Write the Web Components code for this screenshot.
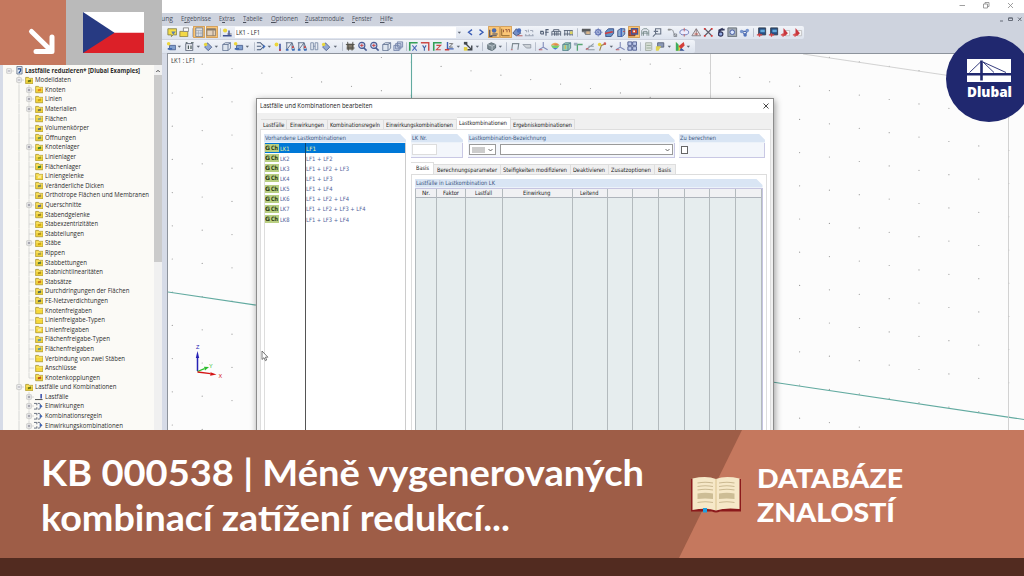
<!DOCTYPE html>
<html lang="cs">
<head>
<meta charset="utf-8">
<title>KB 000538</title>
<style>
	html, body { margin:0; padding:0; }
	body {
		width:1024px;
		height:576px;
		overflow:hidden;
		background:#fff;
		font-family:"Open Sans", "Noto Sans", sans-serif;
	}
</style>
</head>
<body>
<kb-thumbnail></kb-thumbnail>

<script>
// Text squeezed or stretched to a fixed width
class FitText extends HTMLElement {
	constructor() {
		super()
		this.attachShadow({ mode: 'open' })
		this.shadowRoot.innerHTML = `
      <style>
        :host { display:block; flex:none; white-space:nowrap; }
        span { display:inline-block; transform-origin:0 50%; }
      </style>
      <span><slot></slot></span>
    `
	}

	connectedCallback() {
		const width = Number(this.getAttribute('w'))
		const span = this.shadowRoot.querySelector('span')
		const natural = span.offsetWidth ? span.getBoundingClientRect().width : 0
		this.style.width = `${width}px`
		if (natural) span.style.transform = `scaleX(${width / natural})`
	}
}
customElements.define('fit-text', FitText)

const BASE_ICONS = {
	bubble: '<path d="M1 2h10v7H7l-2 2V9H1z" fill="#f6dc3a" stroke="#7d7a42"/><path d="M5 5h5l-3 4z" fill="#5278a8"/>',
	open: '<path d="M1 5h9v6H1z" fill="#f5d738" stroke="#8b7b35"/><path d="M5 1h6v4H5z" fill="#fff" stroke="#777"/>',
	table: '<path d="M2 1h8v10H2z" fill="#dbe3ee" stroke="#68768c"/><path d="M2 4h8M5 4v7M8 4v7M2 7h8" stroke="#8e9bb0" stroke-width=".7"/>',
	panel: '<path d="M1 2h10v8H1z" fill="#e2d3c1" stroke="#7e7468"/><path d="M1 3h10" stroke="#7e7468" stroke-width="2"/><path d="M8 4v6" stroke="#7e7468"/>',
	load: '<circle cx="3.5" cy="4" r="2.4" fill="#ecd52f"/><path d="M1 10h10M8 4v6" stroke="#33468c" stroke-width="1.6"/><path d="M6 8h5" stroke="#556"/>',
	down: '<path d="M4.2 5.5h3.8L6.1 7.6z" fill="#555d6b"/>',
	prev: '<path d="M8 3L4 6l4 3" fill="none" stroke="#2b50b0" stroke-width="1.5"/>',
	next: '<path d="M4 3l4 3-4 3" fill="none" stroke="#2b50b0" stroke-width="1.5"/>',
	support: '<circle cx="7" cy="4" r="2.6" fill="#3b63b5"/><path d="M2 3v8h3M5 8h6M3 10h7" stroke="#344063" fill="none" stroke-width="1.3"/>',
	values: '<path d="M2 2v8h9" stroke="#704d1c" fill="none"/><path d="M4 3v3M6 3h2v3M9 3h2v3" stroke="#8a4632" fill="none"/>',
	eye: '<path d="M1 7l4-5 5 5-5 3z" fill="#6b87c4" stroke="#35436e"/><circle cx="8" cy="4" r="2.5" fill="#3f65b8"/><path d="M6 10h6" stroke="#b14040"/>',
	scale: '<path d="M1 4h2v2M5 3v3M7 4h3v2M1 10h10M2 8v2M6 8v2M10 8v2" stroke="#8f98a9" fill="none"/>',
	quote: '<path d="M2 8V5h3M2 8h3V5M8 10V3h3M7 6h4" stroke="#46536a" fill="none" stroke-width="1.3"/>',
	bridge: '<path d="M1 10V5h10v5M3 5V3h6v2M1 8h10M4 5v5M6 5v5M8 5v5" stroke="#475368" fill="none"/>',
	rail: '<path d="M1 4h10M1 8h10M2 4v6M5 4v6M8 4v6M10.5 4v6" stroke="#475368"/><path d="M8 5h3v3H8z" fill="#d8cf55"/>',
	hand: '<path d="M1 3h6l4 2v4H5L3 6H1z" fill="#7b7d80"/><path d="M1 2h10v3H1z" fill="#4d4f52"/><path d="M6 5h4v3H6z" fill="#d6b183"/>',
	gear: '<circle cx="6" cy="6" r="3" fill="#dfe7ff" stroke="#5366ac" stroke-width="1.3"/><path d="M6 1v10M1 6h10M3 3l6 6M9 3L3 9" stroke="#6476b5" stroke-width=".8"/>',
	cube: '<path d="M2 4l3-2h6v6l-3 3H2zM2 4h6v7M8 4l3-2" fill="#dfe6ef" stroke="#5a6d8e"/>',
	cubered: '<path d="M2 5l3-3h6v5l-3 4H2z" fill="#5a8cc4" stroke="#2a3e78"/><path d="M1 7.5l9-2" stroke="#cf3030" stroke-width="1.8"/>',
	cubeblue: '<path d="M2 4l3-2h5v6l-3 3H2z" fill="#8aaad0" stroke="#314779"/><path d="M6 1v10" stroke="#315bc0" stroke-width="1.6"/><path d="M8 5h2" stroke="#c33"/>',
	target: '<path d="M1 4h7v6H1z" fill="#cc4129" stroke="#60281e"/><path d="M4 2h7v6H4z" fill="#cc4129" stroke="#314e9e" stroke-width="1.5"/><path d="M6 4h2v2H6z" fill="#fff"/>',
	frame: '<path d="M2 10V4l2-2h4l2 2v6M4 10V5h4v5M2 7h8" fill="none" stroke="#6d8180"/>',
	lens: '<path d="M4 2h6v6H4zM5 7l-4 4M2 5h5" fill="none" stroke="#5d687c" stroke-width="1.2"/>',
	arc: '<path d="M1 3h4c3 0 2 6 5 7M8 8h3v3H8z" fill="none" stroke="#72777e"/><path d="M1 2h3v2H1z" fill="#888"/>',
	ellipse: '<ellipse cx="6" cy="6" rx="5" ry="3" fill="#eef" stroke="#5868b0"/><path d="M6 1v4M6 8v3" stroke="#c35454"/>',
	tri: '<path d="M6 2l5 8H1zM6 2v8" fill="#efe4e4" stroke="#776d72"/><path d="M4 8h4" stroke="#c0392b"/>',
	cross: '<path d="M2 2l8 8M10 2l-8 8" stroke="#51505e" stroke-width="1.3"/><path d="M1 1h2v2H1zM9 1h2v2H9zM1 9h2v2H1zM9 9h2v2H9z" fill="#d12c2c"/>',
	six: '<path d="M9 2L5 4v6" stroke="#23284f" stroke-width="2.4" fill="none"/><circle cx="6.5" cy="8" r="2.5" fill="#8fa7e3" stroke="#23284f" stroke-width="1.3"/><path d="M8 2h3v2H8z" fill="#23284f"/>',
	photo: '<path d="M1 1h10v10H1z" fill="#9ba5ae" stroke="#59626b"/><circle cx="6" cy="6" r="2.6" fill="#dbe8ff" stroke="#31489a"/>',
	nodes: '<path d="M3 5h6M3 5l4 4M7 9l3-5" stroke="#4161a8" stroke-width="1.3"/><circle cx="3" cy="5" r="2" fill="#6f8fcb"/><circle cx="9.5" cy="4" r="2" fill="#6f8fcb"/><circle cx="7" cy="9" r="2" fill="#4468b6"/>',
	monitor: '<path d="M3 1h8v8H3z" fill="#16427c" stroke="#27303f"/><path d="M5 3h5v3H5z" fill="#58a4d8"/><path d="M1 9h6M4 7v4" stroke="#d63636" stroke-width="1.5"/>',
	adobe: '<path d="M6 4h5v6H6z" fill="#f6f6f6" stroke="#bbb"/><path d="M4 10V1l5 6-3 3z" fill="#c4272f"/><path d="M1 9h5M3.5 7v4" stroke="#d63636" stroke-width="1.4"/>',
	newload: '<path d="M4 5h7v5H4z" fill="#7899cc" stroke="#44598a"/><circle cx="3" cy="3" r="2" fill="#efd42c"/><path d="M2 9h5" stroke="#355fa7" stroke-width="2"/>',
	calendar: '<path d="M2 3h8v8H2z" fill="#eef0f4" stroke="#4d566b"/><path d="M2 2h2M8 2h3M5 5v4M8 5v4" stroke="#344" stroke-width="1.3"/>',
	drop: '<path d="M5 2l5 5-4 4-4-4z" fill="#8ba3d1" stroke="#43557e"/><circle cx="3" cy="4" r="2" fill="#e8d530"/>',
	branch: '<path d="M1 2h4l4 4-4 4H1M1 6h5" fill="none" stroke="#3b4d6f" stroke-width="1.2"/><path d="M8 4l3 2-3 3z" fill="#3060b0"/>',
	spark: '<circle cx="4" cy="4" r="2.2" fill="#edd52d"/><path d="M8 3v8" stroke="#4559a5" stroke-width="2"/><path d="M8 9v3" stroke="#cb3030" stroke-width="1.6"/>',
	truss: '<path d="M1 2h7l3 8M2 2v8l6-8v8" fill="none" stroke="#586984" stroke-width="1.1"/><path d="M1 9h3v2H1zM8 9h3v2H8z" fill="#3266b5"/><path d="M8 6h2v2H8z" fill="#c83434"/>',
	grid: '<path d="M2 2h3v8H2zM7 2h3v8H7zM5 6h2" fill="#e7ecf4" stroke="#7183a1"/>',
	ghost: '<path d="M2 3h8v7H2z" fill="#7a7060"/><path d="M3 1l1 10M9 1L8 11M1 4h10M2 8h9" stroke="#43423a" stroke-width="1"/>',
	zoom: '<circle cx="5.5" cy="5" r="3.5" fill="#cfdef5" stroke="#3e518c" stroke-width="1.3"/><path d="M8 8l3 3" stroke="#3e518c" stroke-width="1.8"/><path d="M5.5 3v4M3.5 5h4" stroke="#c93030"/>',
	layers: '<path d="M5 1h6v6H5zM3 3h6v6H3zM1 5h6v6H1z" fill="#c8d2e6" stroke="#6a7ba4"/>',
	axisx: '<path d="M2 11V2h9" stroke="#25984b" stroke-width="1.8" fill="none"/><path d="M5 5l5 6M10 5l-5 6" stroke="#3e62b4" stroke-width="1.2"/>',
	axisy: '<path d="M10 11V2H1" stroke="#c93c39" stroke-width="1.6" fill="none"/><path d="M3 5l2 3 2-3M5 8v3" stroke="#30569d" stroke-width="1.2" fill="none"/>',
	axisz: '<path d="M2 11V2h9" stroke="#259a4b" stroke-width="1.8" fill="none"/><path d="M5 5h5l-5 5h5" stroke="#c93c39" stroke-width="1.2" fill="none"/>',
	axis3: '<path d="M4 1v8h7" stroke="#3255ab" stroke-width="1.6" fill="none"/><path d="M6 3h4L6 7h4" stroke="#555" fill="none"/><path d="M1 10h5" stroke="#c93030" stroke-width="1.7"/>',
	select: '<path d="M2 2l7 7M5 10h5V5" stroke="#343940" stroke-width="1.6" fill="none"/><path d="M1 1h4v3H1z" fill="#343940"/><path d="M1 7h4v4H1z" fill="#e2cb2e"/>',
	ball: '<path d="M2 4l4-2 5 2v4l-4 3-5-2z" fill="#76858d" stroke="#4c5c64"/><path d="M2 4l5 2v5M7 6l4-2" stroke="#b8c4ca" fill="none"/>',
	gate: '<path d="M2 10l1-7h7l-1 7" fill="none" stroke="#76818a" stroke-width="1.3"/><path d="M1 10h2" stroke="#c75b5b"/>',
	tag: '<path d="M1 4h9v4H5z" fill="#ccd1d6" stroke="#8c949f"/>',
	axes: '<path d="M6 1v6l5 3M6 7l-5 3" stroke="#7882b5" stroke-width="1.2" fill="none"/><path d="M1 10h4" stroke="#c34a4a"/>',
	rainbow: '<path d="M1 5c2-4 8-4 10 0z" fill="#e9a04d"/><path d="M1 5h10L9 8H3z" fill="#6dcc61"/><path d="M3 8h6l-3 2z" fill="#3c78ce"/><path d="M5 4.500h4" stroke="#d8593d"/>',
	mesh: '<path d="M2 4l3-2h6v6l-3 3H2z" fill="#8dcbb0" stroke="#4e7a85"/><path d="M2 4h6v7M8 4l3-2" stroke="#507e88" fill="none"/><path d="M5 5v4" stroke="#d3b948" stroke-width="1.5"/>',
	force: '<path d="M5 11V4M2 4h9" stroke="#4ba067" stroke-width="1.5"/><path d="M1 2h4v3H1z" fill="#9ba8bd"/>',
	beam: '<path d="M1 10l9-7M3 10h8M4 6h6" stroke="#87959f" stroke-width="1.2"/><path d="M1 9h3" stroke="#c33"/>',
	branchy: '<path d="M3 11l2-6 5-2" stroke="#957d40" fill="none" stroke-width="1.3"/><circle cx="3" cy="4" r="2" fill="#e9d22e"/><circle cx="9" cy="3" r="1.5" fill="#cd514b"/>',
	windows: '<path d="M1 1h4.5v4H1zM6.500 1H11v4H6.500zM1 6.500h4.500v4H1zM6.500 6.500H11v4H6.500z" fill="#bdc9ec" stroke="#3c4a82"/>',
	doc: '<path d="M3 2h7v8l-1 1H3z" fill="#d9e1d7" stroke="#9ba59b"/><path d="M4 5h5M4 8h5" stroke="#8ca08c"/>',
	palette: '<path d="M3 2h7v5H3z" fill="#8392b2" stroke="#4d566f"/><path d="M1 6h6l-3 5H1z" fill="#e0d243"/>',
	colors: '<path d="M1 1v10h9z" fill="#ddd32e"/><path d="M1 1v10h3V4z" fill="#2fa85a"/><path d="M4 6l6-5 1 4-4 4z" fill="#d3312b"/><path d="M7 8l4 3H5z" fill="#2846af"/>',
}

class ToolIcon extends HTMLElement {
	constructor() {
		super()
		this.attachShadow({ mode: 'open' })
	}

	connectedCallback() {
		const name = this.getAttribute('name')
		this.shadowRoot.innerHTML = `
      <style>
        :host { display:grid; place-items:center; flex:none; width:12px; height:12px; box-sizing:border-box; border-radius:1px; }
        :host([active]) { background:#fbc676; box-shadow:inset 0 0 0 .7px #c99757; }
        :host([name="sep"]) { width:1px; height:9px; background:#b9c0cd; }
        svg { width:10.5px; height:10.5px; display:block; opacity:.92; }
      </style>
      ${name === 'sep' ? '' : `<svg viewBox="0 0 12 12" aria-hidden="true">${BASE_ICONS[name] || ''}</svg>`}
    `
	}
}
customElements.define('tool-icon', ToolIcon)

// [icon, centre] pairs; a trailing ! marks a pressed button
const TOOLBAR_MAIN = [
	['bubble', 172], ['open', 184], ['sep', 192], ['table!', 199], ['panel!', 211.5], ['sep', 220], ['load', 227],
	['case', 345], ['down', 459], ['prev', 470.5], ['next', 481.5], ['support!', 493.5], ['values!', 505.5], ['eye', 517.5],
	['scale', 529.5], ['quote', 544.5], ['bridge', 556.5], ['rail', 568.5], ['sep', 577.5], ['hand', 586.5],
	['gear', 598], ['cubered', 609.5], ['cubeblue', 621.5], ['target!', 633.5], ['frame', 645.5], ['lens', 657.5],
	['arc', 672.5], ['ellipse', 684.5], ['tri', 696.5], ['cross', 708.5], ['six', 720.5], ['photo', 732.5],
	['nodes', 744.5], ['sep', 753.5], ['monitor', 761.5], ['monitor', 773.5], ['adobe', 785.5], ['adobe', 797.5],
]
const TOOLBAR_VIEW = [
	['newload', 171], ['down', 179.5], ['calendar', 189.5], ['down', 198], ['drop', 208], ['down', 216.5],
	['cube', 226], ['newload', 238.5], ['down', 247], ['sep', 254], ['branch', 261], ['down', 269.5], ['spark', 278],
	['truss', 290], ['truss', 302], ['grid', 314], ['drop', 326.5], ['down', 335], ['sep', 342], ['ghost', 350.5],
	['zoom', 362.5], ['zoom', 374.5], ['cube', 386.5], ['layers', 398.5], ['sep', 406.5], ['axisx', 413.5],
	['axisy', 425.5], ['axisz', 437.5], ['axis3', 449.5], ['down', 458.5], ['select', 468.5], ['down', 477],
	['sep', 482.5], ['ball', 491.5], ['down', 500], ['sep', 506.5], ['gate', 515], ['tag', 527], ['sep', 535],
	['axes', 543.5], ['rainbow', 555], ['mesh', 566.5], ['force', 578.5], ['beam', 590.5], ['branchy', 602.5],
	['down', 611], ['axes', 620.5], ['windows', 632], ['sep', 640], ['doc', 648.5], ['palette', 660.5],
	['down', 669.5], ['colors', 680], ['down', 688.5],
]

class AppToolbar extends HTMLElement {
	constructor() {
		super()
		this.attachShadow({ mode: 'open' })
	}

	connectedCallback() {
		const items = this.getAttribute('kind') === 'main' ? TOOLBAR_MAIN : TOOLBAR_VIEW
		let edge = 161
		const html = items.map(([key, centre]) => {
			const name = key.replace('!', '')
			const width = name === 'sep' ? 1 : name === 'case' ? 221 : 12
			const gap = centre - width / 2 - edge
			edge = centre + width / 2
			if (name === 'case')
				return `<div class="case" style="margin-left:${gap}px"><fit-text w="24">LK1 - LF1</fit-text></div>`
			return `<tool-icon name="${name}" ${key.endsWith('!') ? 'active' : ''} style="margin-left:${gap}px"></tool-icon>`
		})
		this.shadowRoot.innerHTML = `
      <style>
        :host { display:block; height:14px; padding-left:161px; }
        .bar {
          display:flex;
          align-items:center;
          height:13px;
          width:max-content;
          border-radius:0 2px 2px 0;
          background:linear-gradient(#f1f4f9, #dde3ee);
        }
        .case {
          flex:none;
          display:flex;
          align-items:center;
          box-sizing:border-box;
          width:221px;
          height:11px;
          padding-left:1.5px;
          background:#fff;
          font-size:6.5px;
          color:#222;
        }
      </style>
      <div class="bar">${html.join('')}</div>
    `
	}
}
customElements.define('app-toolbar', AppToolbar)

class AppMenu extends HTMLElement {
	constructor() {
		super()
		this.attachShadow({ mode: 'open' })
		const items = [
			['ung', 161, 12], ['E<u>r</u>gebnisse', 181, 30], ['E<u>x</u>tras', 219, 16], ['<u>T</u>abelle', 243, 19.5],
			['<u>O</u>ptionen', 270.5, 27], ['<u>Z</u>usatzmodule', 305, 39], ['<u>F</u>enster', 352, 20], ['<u>H</u>ilfe', 380, 13],
		]
		let edge = 0
		const html = items.map(([label, x, w]) => {
			const gap = x - edge
			edge = x + w
			return `<fit-text w="${w}" style="margin-left:${gap}px">${label}</fit-text>`
		})
		this.shadowRoot.innerHTML = `
      <style>
        :host { display:flex; align-items:center; height:13px; font-size:6.4px; line-height:10px; color:#4b505c; }
        u { text-decoration-thickness:.5px; text-underline-offset:1px; }
        svg { margin-left:auto; width:24px; height:8px; margin-right:1px; }
      </style>
      ${html.join('')}
      <svg viewBox="0 0 24 8" fill="none" stroke="#666c78"><path d="M1 6h3M9.500 3h4v2.500h-4zM9.500 3h4M19 2.500l3.500 3.500M22.500 2.500L19 6"/></svg>
    `
	}
}
customElements.define('app-menu', AppMenu)

// [level, expander, icon tint, label, width]
const TREE = [
	[0, '-', 'model', 'Lastfälle reduzieren* [Dlubal Examples]', 115],
	[1, '-', '#5b6a10', 'Modelldaten', 36],
	[2, '+', '#e07818', 'Knoten', 20.5],
	[2, '+', '#c79d12', 'Linien', 17],
	[2, '+', '#6b6a52', 'Materialien', 31.5],
	[2, '', '#7d9a8c', 'Flächen', 22],
	[2, '', '#3e5a8c', 'Volumenkörper', 44],
	[2, '', '#5d8a5a', 'Öffnungen', 31],
	[2, '+', '#277a2c', 'Knotenlager', 34.5],
	[2, '', '#8c9a2c', 'Linienlager', 31],
	[2, '', '#1f6b38', 'Flächenlager', 36],
	[2, '', '#f7eeb0', 'Liniengelenke', 39],
	[2, '', '#6b7a6a', 'Veränderliche Dicken', 59],
	[2, '', '#8a7a5a', 'Orthotrope Flächen und Membranen', 104],
	[2, '+', '#4c5a9c', 'Querschnitte', 36.5],
	[2, '', '#8a7620', 'Stabendgelenke', 45],
	[2, '', '#c79d12', 'Stabexzentrizitäten', 53],
	[2, '', '#a88718', 'Stabteilungen', 39],
	[2, '+', '#c79d12', 'Stäbe', 16],
	[2, '', '#9a9450', 'Rippen', 20],
	[2, '', '#4a6b3a', 'Stabbettungen', 42],
	[2, '', '#a88718', 'Stabnichtlinearitäten', 58],
	[2, '', '#c06a1c', 'Stabsätze', 26.5],
	[2, '', '#3d5c5a', 'Durchdringungen der Flächen', 84.5],
	[2, '', '#4a5a4a', 'FE-Netzverdichtungen', 63],
	[2, '', '', 'Knotenfreigaben', 47],
	[2, '', '', 'Linienfreigabe-Typen', 60],
	[2, '', '#f7eeb0', 'Linienfreigaben', 44],
	[2, '', '#4f8fb0', 'Flächenfreigabe-Typen', 65],
	[2, '', '#4f8fb0', 'Flächenfreigaben', 49],
	[2, '', '', 'Verbindung von zwei Stäben', 80],
	[2, '', '', 'Anschlüsse', 31.5],
	[2, 'end', '#b0401c', 'Knotenkopplungen', 55],
	[1, '-', '#5b6a10', 'Lastfälle und Kombinationen', 81.5],
	[2, '+', 'case', 'Lastfälle', 23.5],
	[2, '+', 'combo', 'Einwirkungen', 39],
	[2, '+', 'combo', 'Kombinationsregeln', 57],
	[2, '+', 'combo', 'Einwirkungskombinationen', 78],
]

class ProjectTree extends HTMLElement {
	constructor() {
		super()
		this.attachShadow({ mode: 'open' })
		this.shadowRoot.innerHTML = `
      <style>
        :host { display:flex; flex:none; width:167px; box-sizing:border-box; background:#d6dbe7; padding-left:3px; }
        .list { width:151px; background:#fbfaf6; padding-top:12.2px; font-size:6.5px; line-height:9.6px; color:#2d2d2d; overflow:hidden; box-sizing:border-box; }
        .row { display:flex; align-items:center; height:9.6px; padding-left:.5px; }
        .row.root { font-weight:700; }
        .cell { flex:none; width:10px; height:9.6px; display:block; }
        .icon { flex:none; width:8.5px; height:8.5px; margin:0 2px 0 1px; }
        .wide { margin-left:-1px; width:10.5px; }
        .scroll { width:8px; background:#f0f0f0; padding-top:12px; display:flex; flex-direction:column; align-items:center; }
        .scroll svg { width:8px; height:9px; }
        .thumb { width:8px; height:187px; background:#cbcbcb; }
      </style>
      <div class="list">${TREE.map((row) => this.row(row)).join('')}</div>
      <div class="scroll">
        <svg viewBox="0 0 8 9"><path d="M2.300 6L4 4.300 5.700 6" fill="none" stroke="#444" stroke-width="1"/></svg>
        <div class="thumb"></div>
      </div>
    `
	}

	row([level, expander, tint, label, width]) {
		const cells = []
		if (level === 2) cells.push(this.cell('blank'), this.cell('pass'), this.cell(expander))
		if (level === 1) cells.push(this.cell('blank'), this.cell(expander))
		if (level === 0) cells.push(this.cell('root'))
		return `<div class="row ${level ? '' : 'root'}">${cells.join('')}${this.icon(tint)}<fit-text w="${width}">${label}</fit-text></div>`
	}

	cell(kind) {
		let art = ''
		if (kind !== 'blank' && kind !== 'root')
			art += `<path d="M5 0V${kind === 'end' ? 5 : 9.6}" stroke="#cfcfcf" stroke-width=".8"/>`
		if (kind !== 'blank' && kind !== 'pass') art += '<path d="M5 5h6" stroke="#cfcfcf" stroke-width=".8"/>'
		if (kind === '+' || kind === '-' || kind === 'root') {
			art += '<path d="M2.800 2.800h4.400v4.400H2.800z" fill="#fff" stroke="#b5b5b5" stroke-width=".7"/><path d="M3.700 5h2.600" stroke="#667" stroke-width=".7"/>'
			if (kind === '+') art += '<path d="M5 3.700v2.600" stroke="#667" stroke-width=".7"/>'
		}
		return `<svg class="cell" viewBox="0 0 10 9.6">${art}</svg>`
	}

	icon(tint) {
		if (tint === 'model')
			return '<svg class="icon" viewBox="0 0 9 9"><path d="M2 .5h5.500v8H2z" fill="#dfe9f5" stroke="#5b6a80" stroke-width=".8"/><path d="M3 3h3v2L4 7.500" fill="none" stroke="#23498a" stroke-width="1.200"/></svg>'
		if (tint === 'case')
			return '<svg class="icon" viewBox="0 0 9 9"><path d="M0 8h8" stroke="#444"/><path d="M6.500 2v5" stroke="#3348a8" stroke-width="1.600"/></svg>'
		if (tint === 'combo')
			return '<svg class="icon wide" viewBox="0 0 11 9"><path d="M1 1.500h3v2M1 7.500h3v-2M5 1.500h2l2 3-2 3H5" fill="none" stroke="#555f70" stroke-width=".9"/><path d="M7 2.500l3 2-3 2z" fill="#3c62ba"/></svg>'
		const mark = tint ? `<path d="M3 4.200h3.500v2.300H3z" fill="${tint}" opacity=".75"/><path d="M3 6.500l3.500-2.800" stroke="${tint}" stroke-width=".8"/>` : ''
		return `<svg class="icon" viewBox="0 0 9 9"><path d="M.7 1.500h3l.7 1h4v5.700H.7z" fill="#f6d93c" stroke="#a8922c" stroke-width=".8"/><path d="M1.200 3.300h6.800" stroke="#fff09a" stroke-width=".7"/>${mark}</svg>`
	}
}
customElements.define('project-tree', ProjectTree)

class ModelView extends HTMLElement {
	constructor() {
		super()
		this.attachShadow({ mode: 'open' })
		this.shadowRoot.innerHTML = `
      <style>
        :host { display:block; flex:1; background:#fcfcfc; border:solid #8d939c; border-width:1px 0 0 1px; margin-top:-1px; position:relative; font-size:6.4px; color:#333; }
        svg { position:absolute; left:0; top:0; width:856px; height:376px; }
        fit-text { padding:2px 0 0 2.5px; position:relative; }
      </style>
      <svg viewBox="168 54 856 376">
        ${this.dots()}
        <path d="M168 292L1024 419.500M411.500 54v60" stroke="#62aaa0" stroke-width="1.100" fill="none"/>
        <path d="M803 54l206 30.500M1008.500 84v346M710.500 54v60" stroke="#cdcdcd" stroke-width=".9" fill="none"/>
        <path d="M197.500 371v-14" stroke="#2722b4" stroke-width="1.500"/>
        <path d="M195.800 358l1.700-7 1.700 7z" fill="#2722b4"/>
        <path d="M197.500 371.500l7-2.800" stroke="#2bbd2b" stroke-width="1.300"/>
        <path d="M204 366.800l5 .2-4 3.400z" fill="#2bbd2b"/>
        <path d="M197.500 372l13 1.700" stroke="#d41414" stroke-width="1.300"/>
        <path d="M210.500 372.200l6 2.300-6.300 1.200z" fill="#d41414"/>
        <g font-family="Liberation Sans" font-size="5.500">
          <text x="196" y="348.500" fill="#2722b4">Z</text>
          <text x="209" y="368" fill="#2bbd2b">Y</text>
          <text x="218.500" y="377.500" fill="#d41414">X</text>
        </g>
      </svg>
      <fit-text w="24.5">LK1 : LF1</fit-text>
    `
	}

	dots() {
		let out = ''
		for (let col = 0; col < 29; col++) {
			for (let row = -5; row < 12; row++) {
				const x = 172.3 + col * 29.87
				const y = 93 + col * 4.42 + row * 33.2
				// nothing is drawn above the model's upper edge on the right
				if (y < 56 || y > 430 || x > 1010) continue
				if (x > 803 && y < 53 + (x - 803) * 0.148) continue
				out += `<circle cx="${x.toFixed(1)}" cy="${y.toFixed(1)}" r=".6" fill="#9a9a9a"/>`
			}
		}
		return out
	}
}
customElements.define('model-view', ModelView)

// Titled box with a cut top right corner
class GroupBox extends HTMLElement {
	constructor() {
		super()
		this.attachShadow({ mode: 'open' })
	}

	connectedCallback() {
		this.shadowRoot.innerHTML = `
      <style>
        :host { display:block; flex:none; box-sizing:border-box; }
        .head {
          height:8.5px;
          padding-left:1px;
          background:#d9e5f4;
          clip-path:polygon(0 0, calc(100% - 6px) 0, 100% 6px, 100% 100%, 0 100%);
          color:#3b5680;
          font-size:6px;
          line-height:8.5px;
        }
        .body { background:#f3f6fb; }
        :host([boxed]) .body { height:15.5px; display:flex; align-items:center; gap:4px; padding-left:1px; box-sizing:border-box; border:solid #c9c8e4; border-width:0 1px 1px 0; }
      </style>
      <div class="head"><fit-text w="${this.getAttribute('tw')}">${this.getAttribute('label')}</fit-text></div>
      <div class="body"><slot></slot></div>
    `
	}
}
customElements.define('group-box', GroupBox)

class TabStrip extends HTMLElement {
	constructor() {
		super()
		this.attachShadow({ mode: 'open' })
	}

	connectedCallback() {
		// items: "label|tab width|text width", the active one starts with *
		const tabs = this.getAttribute('items').split(';').map((item) => {
			const [label, width, textWidth] = item.split('|')
			const active = label.startsWith('*')
			return `<div class="tab ${active ? 'active' : ''}" style="width:${width}px"><fit-text w="${textWidth}">${label.replace('*', '')}</fit-text></div>`
		})
		this.shadowRoot.innerHTML = `
      <style>
        :host { display:flex; align-items:flex-end; height:12px; font-size:6px; line-height:10px; color:#222; }
        .tab { flex:none; display:flex; justify-content:center; align-items:center; box-sizing:border-box; height:10px; background:#f0f0f0; border:solid #dedede; border-width:1px 1px 0 0; }
        .tab.active { height:12px; background:#fff; padding-bottom:2px; }
      </style>
      ${tabs.join('')}
    `
	}
}
customElements.define('tab-strip', TabStrip)

class CombinationDialog extends HTMLElement {
	constructor() {
		super()
		this.attachShadow({ mode: 'open' })
		const cases = [
			['LK1', 'LF1', 10], ['LK2', 'LF1 + LF2', 26.5], ['LK3', 'LF1 + LF2 + LF3', 43], ['LK4', 'LF1 + LF3', 26.5],
			['LK5', 'LF1 + LF4', 26.5], ['LK6', 'LF1 + LF2 + LF4', 43], ['LK7', 'LF1 + LF2 + LF3 + LF4', 59.5], ['LK8', 'LF1 + LF3 + LF4', 43],
		]
		const columns = [
			['Nr.', 22.5, 8], ['Faktor', 29, 16], ['Lastfall', 36.5, 17], ['Einwirkung', 70, 27.5], ['Leitend', 35, 18.5],
			['', 25.7], ['', 25.7], ['', 25.7], ['', 25.6], ['', 25.6], ['', 25.6],
		]
		this.shadowRoot.innerHTML = `
      <style>
        :host {
          display:flex;
          flex-direction:column;
          box-sizing:border-box;
          width:518.5px;
          height:340px;
          border:1px solid #8c8c8c;
          background:#f0f0f0;
          box-shadow:1px 2px 7px rgba(0, 0, 0, 0.4);
          font-family:"DejaVu Sans Condensed", "Noto Sans", sans-serif;
        }
        .title { display:flex; align-items:center; justify-content:space-between; height:15.5px; padding:0 3.5px 0 3px; background:#fff; font:6.4px/14px "Open Sans"; color:#222; }
        .title svg { width:8px; height:8px; }
        .outer { padding:4px 0 0 4px; }
        .page { display:flex; box-sizing:border-box; width:511px; height:310px; margin-left:3px; padding:4px 3px 0; background:#fff; border:1px solid #dedede; }
        .existing { width:143.5px; }
        .cases { border-left:1px solid #ddd; border-right:1px solid #ccc; padding-top:.5px; height:290px; background:linear-gradient(90deg, #fff 40px, #555 40px, #555 41px, #fff 41px); }
        .case { display:flex; align-items:center; height:10.15px; font-size:6px; line-height:9px; color:#50649a; }
        .case.on { background:linear-gradient(90deg, #0078d7 40px, #0b4471 40px, #0b4471 41px, #0078d7 41px); color:#e8f29a; }
        .badge { flex:none; height:8px; line-height:8px; background:#b9cf82; color:#2c3a14; font-weight:bold; padding:0 .5px; }
        .name { margin:0 16.5px 0 1.5px; }
        .detail { margin-left:5px; width:356px; }
        .groups { display:flex; gap:4.5px; }
        .input { box-sizing:border-box; height:11px; background:#fff; border:1px solid #ddd; }
        .combo { display:flex; align-items:center; justify-content:space-between; box-sizing:border-box; height:11px; background:#fff; border:1px solid #9a9a9a; padding:0 2px; }
        .combo i { width:13px; height:6px; background:#ccc; }
        .combo svg { width:5px; height:4px; margin-left:auto; }
        .check { box-sizing:border-box; width:7.5px; height:7.5px; border:1px solid #666; background:#fff; margin-left:.5px; }
        .inner { margin-top:4px; }
        .sheet { box-sizing:border-box; height:270px; background:#fff; border:1px solid #ddd; padding:4px 3px 0 2.5px; }
        .table { display:flex; height:250px; border:solid #c5c4e0; border-width:1px 1px 0 0; }
        .col { flex:none; box-sizing:border-box; background:#e6edee; border-right:1px solid #b3babd; }
        .col:first-child { border-left:1px solid #b3babd; }
        .th { height:8.5px; display:flex; justify-content:center; background:#f0f1f3; border-bottom:1px solid #aeb4bb; font-size:6px; line-height:8.5px; color:#222; }
      </style>
      <div class="title">
        <fit-text w="112.5">Lastfälle und Kombinationen bearbeiten</fit-text>
        <svg viewBox="0 0 8 8"><path d="M1.500 1.500l5 5M6.500 1.500l-5 5" stroke="#333" stroke-width=".9"/></svg>
      </div>
      <div class="outer">
        <tab-strip items="Lastfälle|26.5|21.5;Einwirkungen|40.5|34;Kombinationsregeln|56|50;Einwirkungskombinationen|73|67;*Lastkombinationen|54|48;Ergebniskombinationen|64.5|59"></tab-strip>
      </div>
      <div class="page">
        <div class="existing">
          <group-box label="Vorhandene Lastkombinationen" tw="81"></group-box>
          <div class="cases">
            ${cases.map(([name, formula, width], i) => `
              <div class="case ${i ? '' : 'on'}">
                <fit-text class="badge" w="5">G</fit-text>
                <fit-text class="badge" w="7">Ch</fit-text>
                <fit-text class="name" w="9.5">${name}</fit-text>
                <fit-text w="${width}">${formula}</fit-text>
              </div>`).join('')}
          </div>
        </div>
        <div class="detail">
          <div class="groups">
            <group-box boxed label="LK Nr." tw="15" style="width:52px"><div class="input" style="width:25px"></div></group-box>
            <group-box boxed label="Lastkombination-Bezeichnung" tw="77" style="width:207px">
              <div class="combo" style="width:27px"><i></i><svg viewBox="0 0 5 4"><path d="M.5 1l2 2 2-2" fill="none" stroke="#444" stroke-width=".8"/></svg></div>
              <div class="combo" style="width:173px"><svg viewBox="0 0 5 4"><path d="M.5 1l2 2 2-2" fill="none" stroke="#444" stroke-width=".8"/></svg></div>
            </group-box>
            <group-box boxed label="Zu berechnen" tw="36" style="width:86px"><div class="check"></div></group-box>
          </div>
          <tab-strip class="inner" items="*Basis|23|13;Berechnungsparameter|66.5|60;Steifigkeiten modifizieren|70|64;Deaktivieren|38|32;Zusatzoptionen|46|40;Basis|21|13"></tab-strip>
          <div class="sheet">
            <group-box label="Lastfälle in Lastkombination LK" tw="79"></group-box>
            <div class="table">
              ${columns.map(([label, width, textWidth]) => `
                <div class="col" style="width:${width}px"><div class="th">${label ? `<fit-text w="${textWidth}">${label}</fit-text>` : ''}</div></div>`).join('')}
            </div>
          </div>
        </div>
      </div>
    `
	}
}
customElements.define('combination-dialog', CombinationDialog)

class AppWindow extends HTMLElement {
	constructor() {
		super()
		this.attachShadow({ mode: 'open' })
		this.shadowRoot.innerHTML = `
      <style>
        :host { display:flex; flex-direction:column; position:relative; height:430px; overflow:hidden; background:#ced3de; }
        .caption { height:12.5px; flex:none; background:#fff; display:flex; justify-content:flex-end; }
        .caption svg { width:60px; height:10px; margin-right:7px; }
        .work { flex:1; min-height:0; display:flex; }
        combination-dialog { position:absolute; left:255.5px; top:98px; }
        .cursor { position:absolute; left:261px; top:350px; width:8px; height:12px; }
      </style>
      <div class="caption">
        <svg viewBox="0 0 60 10" fill="none" stroke="#888" stroke-width=".8"><path d="M2.500 5.500H8M26.500 4h4v4h-4zM28 4V2.500h4v4h-1.500M51 3l5 5M56 3l-5 5"/></svg>
      </div>
      <app-menu></app-menu>
      <app-toolbar kind="main"></app-toolbar>
      <app-toolbar kind="view"></app-toolbar>
      <div class="work">
        <project-tree></project-tree>
        <model-view></model-view>
      </div>
      <combination-dialog></combination-dialog>
      <svg class="cursor" viewBox="0 0 8 12"><path d="M1 1v8.500l2-1.800 1.400 3 1.300-.7-1.300-2.800h2.500z" fill="#fff" stroke="#555" stroke-width=".8"/></svg>
    `
	}
}
customElements.define('app-window', AppWindow)

class LanguageBadge extends HTMLElement {
	constructor() {
		super()
		this.attachShadow({ mode: 'open' })
		this.shadowRoot.innerHTML = `
      <style>
        :host { display:flex; width:161.5px; height:65px; background:#bababa; }
        .arrow { width:65.5px; height:65px; background:#c5785e; }
        .flag { width:61px; height:41px; margin:12px 0 0 17.5px; }
      </style>
      <svg class="arrow" viewBox="0 0 65.500 65"><path d="M31.500 31.500L51 50.500M36 51.500h16V37" fill="none" stroke="#fff" stroke-width="5" stroke-linecap="round" stroke-linejoin="round"/></svg>
      <svg class="flag" viewBox="0 0 61 41"><path d="M0 0h61v21H0z" fill="#fff"/><path d="M0 20.700h61V41H0z" fill="#dc2028"/><path d="M0 0l31.500 20.700L0 41z" fill="#273a82"/></svg>
    `
	}
}
customElements.define('language-badge', LanguageBadge)

class DlubalLogo extends HTMLElement {
	constructor() {
		super()
		this.attachShadow({ mode: 'open' })
		this.shadowRoot.innerHTML = `
      <style>
        :host { display:flex; flex-direction:column; align-items:center; box-sizing:border-box; width:86px; height:86px; padding-top:23.5px; border-radius:50%; background:#20286f; color:#fff; font:800 14.5px/20px "Open Sans", "Noto Sans", sans-serif; }
        svg { width:44px; height:23px; }
      </style>
      <svg viewBox="0 0 44 23"><path d="M0 0h44v14H0zM0 16.500h44V23H0z" fill="#fff"/><path d="M14.500 1.500v20" stroke="#20286f" stroke-width="2.600"/><path d="M14 2.500L2.500 13.500M16 3l11 10.500M16 3l23 10.500" stroke="#20286f" stroke-width=".9"/></svg>
      <fit-text w="45">Dlubal</fit-text>
    `
	}
}
customElements.define('dlubal-logo', DlubalLogo)

class TitleBanner extends HTMLElement {
	constructor() {
		super()
		this.attachShadow({ mode: 'open' })
		this.shadowRoot.innerHTML = `
      <style>
        :host {
          display:flex;
          box-sizing:border-box;
          height:146px;
          border-bottom:18px solid #522b20;
          background:#9e5d47;
          color:#fff;
          font-family:Lato, sans-serif;
        }
        .title { width:638.5px; padding:20px 0 0 40.5px; font-size:36px; line-height:45px; font-weight:700; }
        .side { display:flex; width:345px; background:#c5785e; clip-path:polygon(63px 0, 100% 0, 100% 100%, 0 100%); }
        .book { flex:none; width:50px; height:36px; margin:47px 0 0 -333px; z-index:1; }
        .section { padding:31px 0 0 16px; font-size:27px; line-height:34px; font-weight:900; z-index:1; }
      </style>
      <div class="title">
        <fit-text w="603">KB 000538 | Méně vygenerovaných</fit-text>
        <fit-text w="469">kombinací zatížení redukcí...</fit-text>
      </div>
      <div class="side"></div>
      <svg class="book" viewBox="0 0 50 36">
        <path d="M0 2h50v32.500H29q-4 2-8 0H0z" fill="#8b1a1c"/>
        <path d="M1.500 1.500Q16-1.500 25 2q9-3.500 23.500-.5V32Q34 30.500 25 33.500 16 30.500 1.500 33z" fill="#f6e8c8"/>
        <path d="M25 2v31" stroke="#e3cfa2" stroke-width="1.500"/>
        <path d="M6.500 6q8-1.500 15.500 0M6.500 9.500q8-1.500 15.500 0M6.500 13q8-1.500 15.500 0M6.500 25.500q8-1.500 15.500 0M28 6q8-1.500 15.500 0M28 9.500q8-1.500 15.500 0M28 13q8-1.500 15.500 0M28 25.500q8-1.500 15.500 0" fill="none" stroke="#cbb991" stroke-width="1.200"/>
        <path d="M6.500 16.500q8-1.500 15.500 0V22q-8-1-15.500 0zM28 16.500q8-1.500 15.500 0V22q-8-1-15.500 0z" fill="#cdbd95"/>
        <path d="M12 31h4v4.500h-4z" fill="#1f9fe0"/>
      </svg>
      <div class="section">
        <fit-text w="146">DATABÁZE</fit-text>
        <fit-text w="138">ZNALOSTÍ</fit-text>
      </div>
    `
	}
}
customElements.define('title-banner', TitleBanner)

class KbThumbnail extends HTMLElement {
	constructor() {
		super()
		this.attachShadow({ mode: 'open' })
		this.shadowRoot.innerHTML = `
      <style>
        :host { display:block; position:relative; width:1024px; height:576px; overflow:hidden; }
        language-badge { position:absolute; left:0; top:0; }
        dlubal-logo { position:absolute; left:946px; top:35.5px; }
      </style>
      <app-window></app-window>
      <title-banner></title-banner>
      <language-badge></language-badge>
      <dlubal-logo></dlubal-logo>
    `
	}
}
customElements.define('kb-thumbnail', KbThumbnail)
</script>
</body>
</html>
